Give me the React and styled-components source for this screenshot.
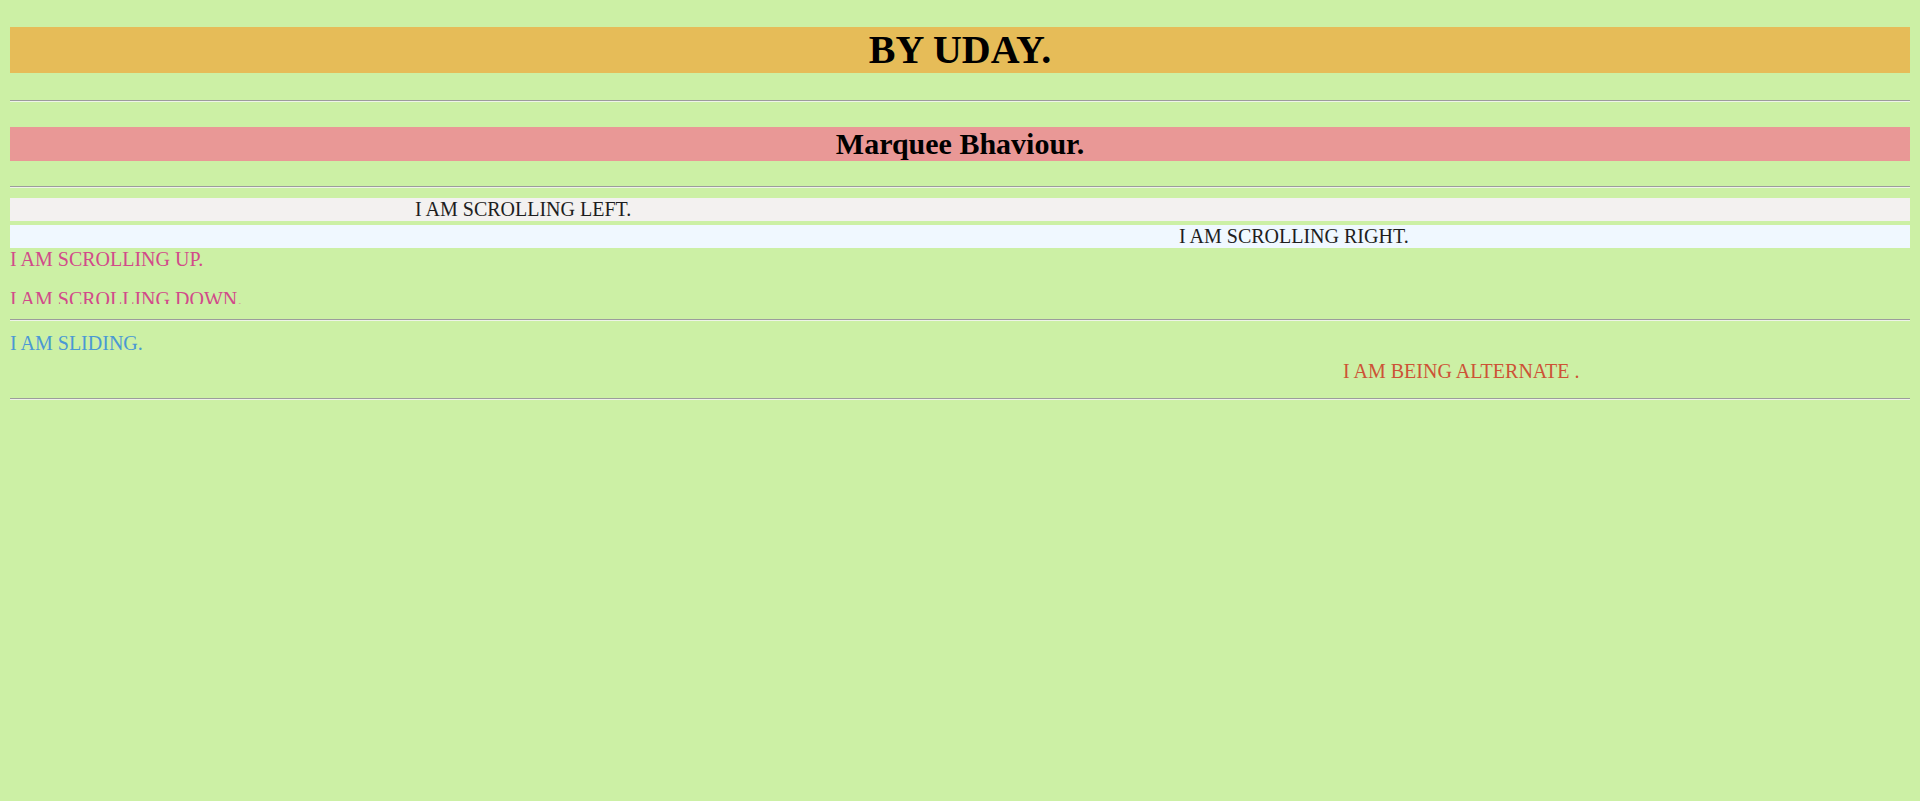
import React from 'react';
import styled, { createGlobalStyle } from 'styled-components';

const GlobalStyle = createGlobalStyle`
  html, body {
    margin: 0;
    padding: 0;
    background: #ccf0a5;
  }
  body {
    font-family: 'Liberation Serif', 'Times New Roman', serif;
  }
`;

function App() {
  return (
    <>
      <GlobalStyle />
      <Page>
        <Title>BY UDAY.</Title>
        <Rule top="26.5px" />
        <SubTitle>Marquee Bhaviour.</SubTitle>
        <Rule top="25px" />

        <Track bg="#f3f1f0" top="10px">
          <Moving offset={405}>I AM SCROLLING LEFT.</Moving>
        </Track>
        <Track bg="#f0f8ff" top="4px">
          <Moving offset={1169}>I AM SCROLLING RIGHT.</Moving>
        </Track>
        <VerticalBox height="31px">
          <Moving color="#d24a8a">I AM SCROLLING UP.</Moving>
        </VerticalBox>
        <VerticalBox height="25px" shift="8.5px">
          <Moving color="#d24a8a">I AM SCROLLING DOWN.</Moving>
        </VerticalBox>

        <Rule top="14.5px" />
        <Track top="11px">
          <Moving color="#4a98d4">I AM SLIDING.</Moving>
        </Track>
        <Track top="5px">
          <Moving offset={1333} color="#cd5336">I AM BEING ALTERNATE .</Moving>
        </Track>
        <Rule top="15px" />
      </Page>
    </>
  );
}

export default App;

const Page = styled.div`
  display: flex;
  flex-direction: column;
  padding: 0 10px;
  min-height: 801px;
  box-sizing: border-box;
`;

const Title = styled.h1`
  margin: 27px 0 0;
  height: 46px;
  line-height: 46px;
  font-size: 40px;
  font-weight: bold;
  text-align: center;
  background: #e6bc58;
  color: #000;
`;

const SubTitle = styled.h2`
  margin: 25px 0 0;
  height: 34.5px;
  line-height: 34.5px;
  font-size: 30px;
  font-weight: bold;
  text-align: center;
  background: #e99896;
  color: #000;
`;

const Rule = styled.hr`
  margin: ${p => p.top} 0 0;
  height: 0;
  border: none;
  border-top: 1.25px solid #9c9c9c;
  border-bottom: 1.25px solid #eef3e8;
`;

const Track = styled.div`
  margin-top: ${p => p.top || '0'};
  height: 23px;
  line-height: 23px;
  background: ${p => p.bg || 'transparent'};
  overflow: hidden;
  white-space: nowrap;
  font-size: 20px;
`;

const VerticalBox = styled.div`
  height: ${p => p.height};
  padding-top: ${p => p.shift || '0'};
  box-sizing: border-box;
  line-height: 23px;
  overflow: hidden;
  white-space: nowrap;
  font-size: 20px;
`;

const Moving = styled.span`
  display: inline-block;
  margin-left: ${p => (p.offset || 0)}px;
  color: ${p => p.color || '#1e1e1e'};
`;
